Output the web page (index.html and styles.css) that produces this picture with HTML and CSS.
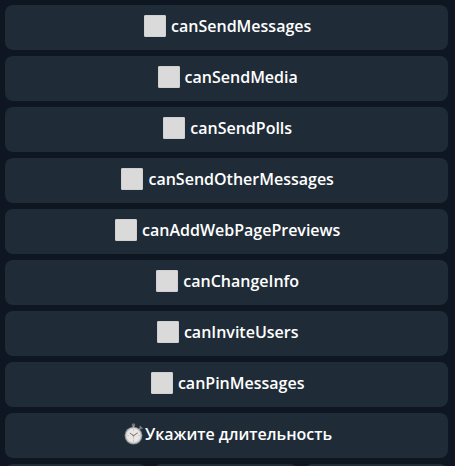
FILE: index.html
```html
<!DOCTYPE html>
<html lang="ru">
<head>
<meta charset="utf-8">
<title>Permissions</title>
<link rel="stylesheet" href="styles.css">
</head>
<body>
<main class="keyboard">
  <button class="key"><span class="box"></span><span class="label">canSendMessages</span></button>
  <button class="key"><span class="box"></span><span class="label">canSendMedia</span></button>
  <button class="key"><span class="box"></span><span class="label">canSendPolls</span></button>
  <button class="key"><span class="box"></span><span class="label">canSendOtherMessages</span></button>
  <button class="key"><span class="box"></span><span class="label">canAddWebPagePreviews</span></button>
  <button class="key"><span class="box"></span><span class="label">canChangeInfo</span></button>
  <button class="key"><span class="box"></span><span class="label">canInviteUsers</span></button>
  <button class="key"><span class="box"></span><span class="label">canPinMessages</span></button>
  <button class="key duration">
    <svg class="watch" viewBox="0 0 20 22" aria-hidden="true">
      <rect x="7.8" y="0.6" width="3.4" height="2.4" rx="0.8" fill="#707173"/>
      <path d="M9.5 2.5v2" stroke="#a4a6a8" stroke-width="2"/>
      <path d="M15.3 6l1.7-1.7" stroke="#85898d" stroke-width="1.7"/>
      <path d="M16.1 3.5l2 2" stroke="#777b80" stroke-width="1.4" stroke-linecap="round"/>
      <circle cx="9.5" cy="12.6" r="8.9" fill="#8b8b8c"/>
      <circle cx="9.5" cy="12.6" r="8.1" fill="#c6c4c3"/>
      <circle cx="9.5" cy="12.6" r="7" fill="#e9e7e5"/>
      <path d="M9.5 6.5v1.4M9.5 17.3v1.4M3.4 12.6h1.4M14.2 12.6h1.4" stroke="#aaa6a3" stroke-width="0.7"/>
      <path d="M5.8 10l3.7 2.6 4.3-2.8" fill="none" stroke="#77706d" stroke-width="1"/>
      <path d="M9.5 12.6v4" stroke="#dba69c" stroke-width="0.6"/>
      <circle cx="9.5" cy="12.6" r="0.9" fill="#8c706a"/>
    </svg>
    <span class="label">Укажите длительность</span>
  </button>
  <div class="triple">
    <button class="key"></button>
    <button class="key"></button>
    <button class="key"></button>
  </div>
</main>
</body>
</html>
```
FILE: styles.css
```css
* {
  box-sizing: border-box;
}

html {
  overflow: hidden;
}

body {
  margin: 0;
  height: 466px;
  overflow: hidden;
  background: #0e1621;
  font-family: "Open Sans", "Noto Sans", sans-serif;
}

.keyboard {
  display: flex;
  flex-direction: column;
  gap: 6px;
  height: 466px;
  padding: 5px 7px 0 5px;
  overflow: hidden;
}

.key {
  display: flex;
  flex-shrink: 0;
  align-items: center;
  justify-content: center;
  gap: 5px;
  width: 100%;
  height: 45px;
  margin: 0;
  padding: 0 0 3px 2.4px;
  border: 0;
  border-radius: 8px;
  background: #1f2c38;
  color: #fff;
  font: 600 16px/22px "Open Sans", "Noto Sans", sans-serif;
  white-space: nowrap;
}

.box {
  width: 22px;
  height: 22px;
  border: 1px solid #d0d0d0;
  border-radius: 1px;
  background: #dadada;
}

.duration {
  gap: 1px;
  padding-left: 3px;
}

.watch {
  width: 20px;
  height: 22px;
}

.triple {
  display: grid;
  flex-shrink: 0;
  grid-template-columns: 142px 145px 1fr;
  gap: 6px;
}
```
